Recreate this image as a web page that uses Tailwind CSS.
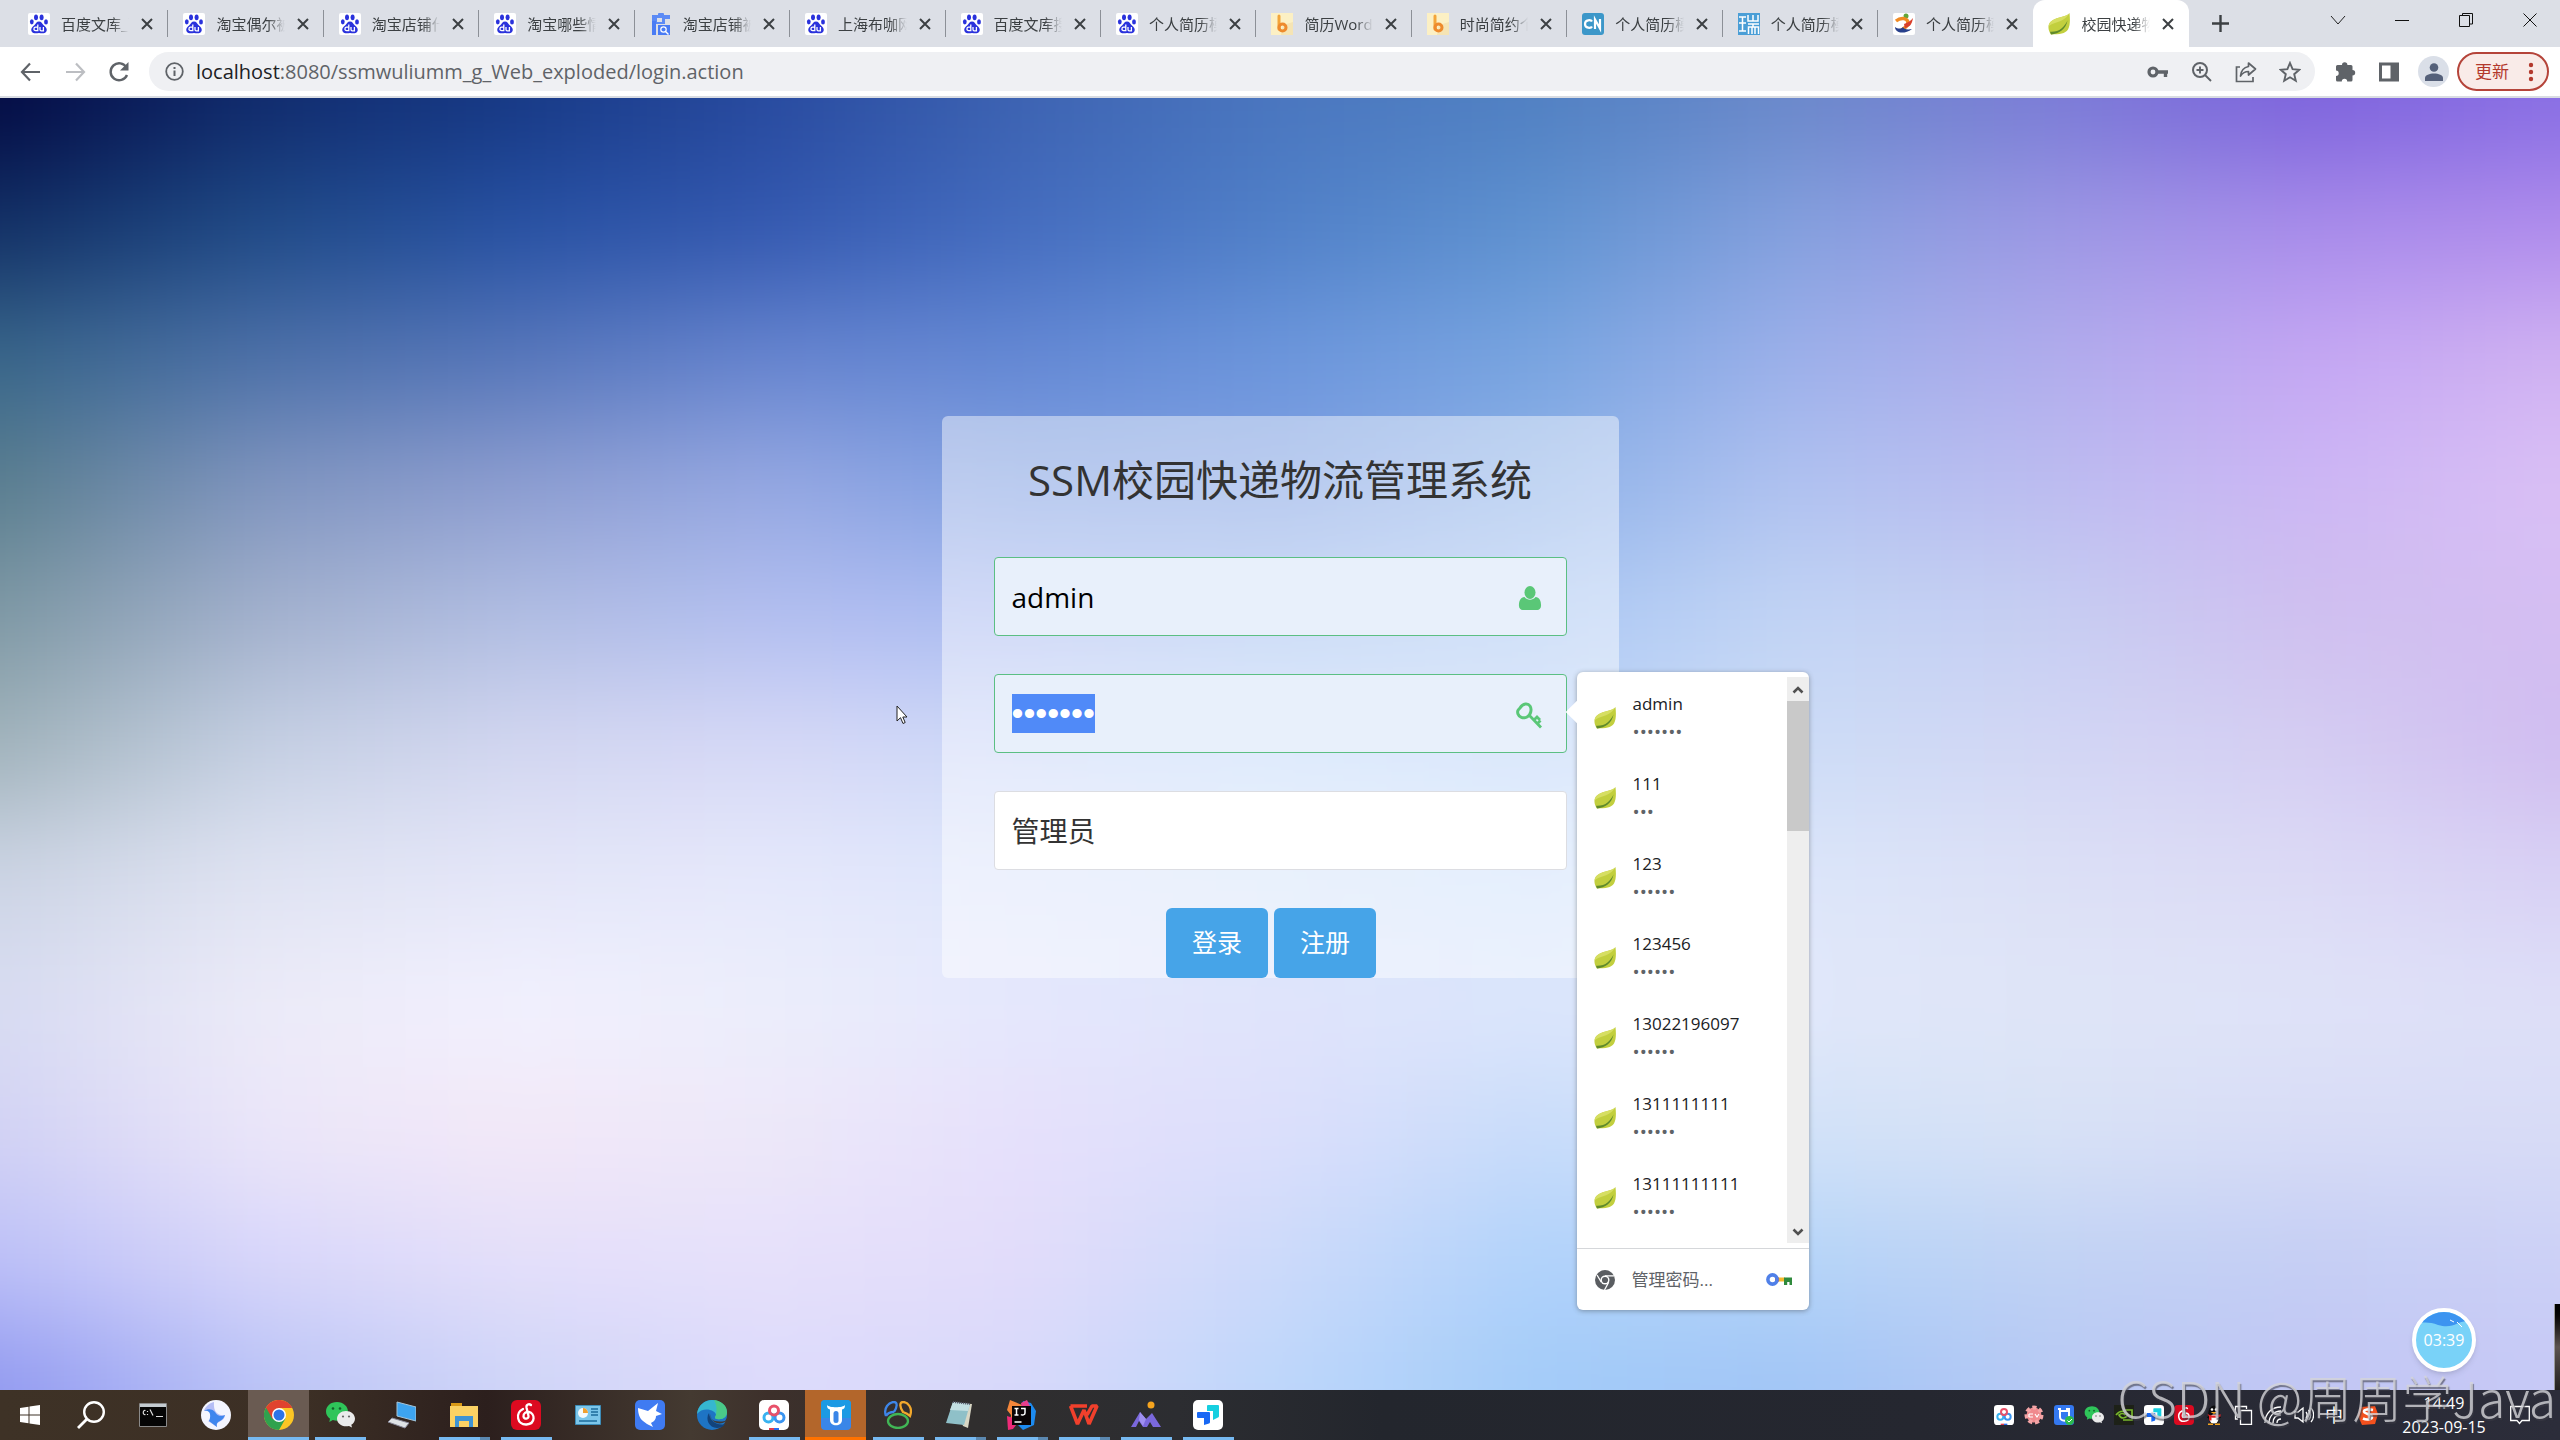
<!DOCTYPE html>
<html lang="zh-CN">
<head>
    <meta charset="UTF-8">
    <meta name="viewport" content="width=device-width, initial-scale=1.0">
    <title>校园快递物流管理系统</title>
    <script src="https://cdn.jsdelivr.net/npm/@tailwindcss/browser@4"></script>
    <style>
        body { font-family: 'Open Sans', 'Noto Sans CJK SC', sans-serif; }
    </style>
</head>
<body class="h-screen flex flex-col overflow-hidden bg-white text-[#202124]">

    <!-- Icon sprites -->
    <svg class="hidden">
        <symbol id="i-baidu" viewBox="0 0 22 22">
            <rect width="22" height="22" rx="2" fill="#fff"/>
            <g fill="#2a32dc">
                <ellipse cx="8" cy="4.3" rx="2" ry="2.9"/><ellipse cx="13.6" cy="4.3" rx="2" ry="2.9"/>
                <ellipse cx="3.8" cy="8.8" rx="1.9" ry="2.6"/><ellipse cx="18" cy="8.9" rx="1.9" ry="2.6"/>
                <path d="M11 8.500c2.600 0 3 2.200 4.700 3.800 2 1.800 3.400 3 3 5.200-.5 3-3.600 3-7.700 2.600-4.100.4-7.200.4-7.700-2.600-.4-2.200 1-3.400 3-5.200C8 10.700 8.400 8.500 11 8.500z"/>
            </g>
            <g fill="none" stroke="#fff" stroke-width="1.3"><path d="M9.800 11.500v6.200H7.600c-2.200 0-2.200-3.600 0-3.600h2.200M12 14v2.600c0 1 .6 1.200 1.200 1.200h2.200V14"/></g>
        </symbol>
        <symbol id="i-doc" viewBox="0 0 22 22">
            <path d="M2 2h18v4h-5v5H6v-3H2z" fill="#5b8af5"/><path d="M7 5h5v4H7z" fill="#dcdfe6"/><rect x="8" y="0" width="6" height="3" rx="1" fill="#5b8af5"/>
            <path d="M2 8h4v14H2zM8 12h12v10H8z" fill="#4a7cf4"/><circle cx="13.500" cy="16.500" r="2.700" fill="none" stroke="#fff" stroke-width="1.2"/><path d="M15.500 18.500l3 3" stroke="#fff" stroke-width="1.4"/>
        </symbol>
        <symbol id="i-b" viewBox="0 0 22 22">
            <rect width="22" height="22" fill="#fcf0c4"/><path d="M12 12l10-3v13H10z" fill="#f5e4b4"/>
            <path d="M8 3v13" stroke="#f3a53a" stroke-width="3" stroke-linecap="round"/><circle cx="11.500" cy="14.500" r="3.500" fill="none" stroke="#ee8a2c" stroke-width="3"/>
        </symbol>
        <symbol id="i-cn" viewBox="0 0 22 22">
            <rect width="22" height="22" rx="3" fill="#3c97c9"/><path d="M10 8.500c-1-2-7-2-7 2.500s6 4.500 7 2.500M13 16V6.500l5 9V6" fill="none" stroke="#fff" stroke-width="2.2"/>
        </symbol>
        <symbol id="i-rui" viewBox="0 0 22 22">
            <rect width="22" height="22" fill="#4a9ed6"/><path d="M1 4h7M1 10h7M1 18h7M4.500 4v14M10 2v6h10V2M15 2v6M10 11h11M15 11v3M10.500 21v-7h10v7M14 14v7M17 14v7" fill="none" stroke="#fff" stroke-width="1.5"/>
        </symbol>
        <symbol id="i-run" viewBox="0 0 22 22">
            <rect width="22" height="22" rx="2" fill="#fff"/><circle cx="13" cy="3" r="2.500" fill="#63a63a"/>
            <path d="M3 8c5-4 12-3 12 2 0 4-5 5-7 8" fill="none" stroke="#f08a24" stroke-width="3.5"/><path d="M11 11c3-1 7-3 9-6-1 6-3 9-8 10z" fill="#d8402c"/><path d="M2 14c0 6 9 8 17 2-5 1-8 0-9-2-2 2-5 2-8 0z" fill="#28408c"/>
        </symbol>
        <symbol id="i-leaf" viewBox="0 0 22 22">
            <path d="M21.500 0C19 5 2 3 .5 13.500.200 17 1.500 18.500 2 20l1 1.500C12 21 17 21 20 16.500 22.500 12 22 5 21.500 0z" fill="#c2cf3e"/>
            <path d="M21.500 0C19 5 2 3 .5 13.500c5-5 15-3 21-13.500z" fill="#d6de62"/>
            <path d="M2 18.800C11 19.500 16.500 14 19.500 7.500 18 16 11 21 3 21.500z" fill="#5f8a2c"/>
        </symbol>
        <symbol id="i-x" viewBox="0 0 12 12"><path d="M1 1l10 10M11 1L1 11" stroke="#3c4043" stroke-width="2" fill="none"/></symbol>
        <symbol id="i-wechat" viewBox="0 0 30 30">
            <path d="M12 2C5.500 2 1 6.200 1 11.500c0 3 1.500 5.500 4 7.200L4.300 22l3.600-1.900c1.300.4 2.700.6 4.100.6C18.500 20.700 23 16.500 23 11.500S18.500 2 12 2z" fill="#2fc55a"/>
            <circle cx="8" cy="8.500" r="1.300" fill="#14602c"/><circle cx="15" cy="8.500" r="1.300" fill="#14602c"/>
            <path d="M21 11c-5 0-9 3.400-9 7.700 0 4.200 4 7.600 9 7.600 1 0 2-.1 3-.4l3 1.600-.7-2.700c2.200-1.400 3.700-3.600 3.700-6.100C30 14.400 26 11 21 11z" fill="#ebebeb"/>
            <circle cx="18" cy="16.500" r="1.100" fill="#666"/><circle cx="24" cy="16.500" r="1.100" fill="#666"/>
        </symbol>
        <symbol id="i-pan" viewBox="0 0 30 30">
            <rect width="30" height="30" rx="5" fill="#fff"/>
            <g fill="none" stroke-width="3"><circle cx="9.500" cy="17.500" r="4.500" stroke="#38b2f0"/><circle cx="20.500" cy="17.500" r="4.500" stroke="#3a94f0"/><circle cx="15" cy="10.500" r="4.500" stroke="#e8516a"/></g>
            <path d="M10 28h5v2h-5z" fill="#e03a4e"/><path d="M15 28h5v2h-5z" fill="#2a6ff0"/>
        </symbol>
        <symbol id="i-netease" viewBox="0 0 30 30">
            <rect width="30" height="30" rx="6" fill="#dc0a20"/>
            <path d="M20 5c-2-1.500-5-.5-4.500 2.500l2 8.500c.6 3-4.500 4-5 .5-.3-3 2.500-5 5.500-4.500 6 1 7 12-2.500 12.500C6 25 4 13 12 9" fill="none" stroke="#fff" stroke-width="2.3" stroke-linecap="round"/>
        </symbol>
        <symbol id="i-todesk" viewBox="0 0 30 30">
            <rect width="30" height="30" rx="5" fill="#fff"/><path d="M14 6q0-1 1-1h10q1 0 1 1v10q0 1-1 1.500l-5 2.500V11h-6z" fill="#16cfe0"/><path d="M4 13q0-1 1-1h11q1 0 1 1v9q0 1-1 1.500l-5 1.500v-7H5q-1 0-1-1z" fill="#1768f4"/>
        </symbol>
        <symbol id="i-bull" viewBox="0 0 30 30">
            <rect width="30" height="30" rx="4" fill="#3a86e8"/><path d="M0 4a4 4 0 014-4h22a4 4 0 014 4v14H0z" fill="#1c9ae4"/>
            <path d="M6 5c0 3 1 4 3 4.500V20c0 7 12 7 12 0V9.500c2-.5 3-1.500 3-4.500-2 3-16 3-18 0z" fill="#fff"/><rect x="12.500" y="11" width="5" height="12" rx="2.500" fill="#3a86e8"/>
        </symbol>
    </svg>

    <!-- Tab strip -->
    <header class="shrink-0">
        <div class="h-[47px] bg-[#dcdfe6] flex items-stretch">
            <div id="tabs" class="w-[85.5%] pl-[13px] flex"></div>
            <button aria-label="新标签页" class="ml-[22px] w-5 grid place-items-center"><svg class="size-[17px]" viewBox="0 0 17 17"><path d="M8.500 0v17M0 8.500h17" stroke="#3c4043" stroke-width="2.4"/></svg></button>
            <div class="ml-auto mr-[22px] h-10 flex items-center gap-12">
                <button aria-label="搜索标签页"><svg class="size-4" viewBox="0 0 16 16"><path d="M1 4l7 8 7-8" stroke="#222" fill="none"/></svg></button>
                <button aria-label="最小化"><svg class="size-4" viewBox="0 0 16 16"><path d="M1 8.500h14" stroke="#111"/></svg></button>
                <button aria-label="还原"><svg class="size-4" viewBox="0 0 16 16"><path d="M1.500 3.500h10v11h-10zM4.500 3V1.500h10v10.500H12" stroke="#111" fill="none"/></svg></button>
                <button aria-label="关闭"><svg class="size-4" viewBox="0 0 16 16"><path d="M1.500 1.500l13 13M14.500 1.500l-13 13" stroke="#111" fill="none"/></svg></button>
            </div>
        </div>

        <!-- Toolbar -->
        <div class="h-[51px] border-b-2 border-[#d9dce2] pl-5 pr-[11px] flex items-center">
            <button aria-label="后退"><svg class="size-[22px]" viewBox="0 0 22 22"><path d="M20 11H2M10 2.500L2 11l8 8.500" stroke="#5f6368" stroke-width="2.2" fill="none"/></svg></button>
            <button aria-label="前进" class="ml-[22px]"><svg class="size-[22px]" viewBox="0 0 22 22"><path d="M2 11h18M12 2.500l8 8.500-8 8.500" stroke="#bcbec2" stroke-width="2.2" fill="none"/></svg></button>
            <button aria-label="重新加载" class="ml-[22px]"><svg class="size-[22px]" viewBox="0 0 22 22"><path d="M18.500 6.500A8.500 8.500 0 1019 14" stroke="#5f6368" stroke-width="2.4" fill="none"/><path d="M20.500 1v8.500H12z" fill="#5f6368"/></svg></button>
            <div class="ml-[19px] flex-1 h-[39px] rounded-full bg-[#eff0f3] flex items-center pl-4 pr-[14px] gap-[22px]">
                <svg class="size-[19px]" viewBox="0 0 19 19"><circle cx="9.500" cy="9.500" r="8.300" fill="none" stroke="#5f6368" stroke-width="1.8"/><path d="M9.500 8.500v5.500M9.500 5v2" stroke="#5f6368" stroke-width="2"/></svg>
                <p class="-ml-2.5 flex-1 text-xl leading-6 text-[#5f6368]"><span class="text-[#202124]">localhost</span>:8080/ssmwuliumm_g_Web_exploded/login.action</p>
                <svg class="size-[22px]" viewBox="0 0 22 22"><circle cx="6" cy="11" r="4" fill="none" stroke="#5f6368" stroke-width="3.2"/><path d="M10 11h11M18.500 11v5" stroke="#5f6368" stroke-width="3.4"/></svg>
                <svg class="size-[22px]" viewBox="0 0 22 22"><circle cx="9" cy="9" r="7" fill="none" stroke="#5f6368" stroke-width="2"/><path d="M14 14l6 6M9 5.500v7M5.500 9h7" stroke="#5f6368" stroke-width="1.9"/></svg>
                <svg class="size-[22px]" viewBox="0 0 22 22"><path d="M5 6H1.500v14.500H18V16" fill="none" stroke="#5f6368" stroke-width="1.7"/><path d="M13.500 2l7 6-7 6v-3.500c-4 0-6 1.500-8 4.500.5-5 3-8.500 8-9.500z" fill="none" stroke="#5f6368" stroke-width="1.7" stroke-linejoin="round"/></svg>
                <svg class="size-[22px]" viewBox="0 0 22 22"><path d="M11 2l2.600 6.200 6.700.6-5.100 4.400 1.600 6.600L11 16.300l-5.800 3.500 1.600-6.600-5.100-4.400 6.700-.6z" fill="none" stroke="#5f6368" stroke-width="1.9"/></svg>
            </div>
            <div class="ml-[19px] flex items-center gap-[22px]">
                <svg class="size-[22px]" viewBox="0 0 22 22"><path d="M8 4a2.700 2.700 0 015.400 0H17a1.500 1.500 0 011.500 1.500V9a2.700 2.700 0 010 5.400V19a1.500 1.500 0 01-1.500 1.500h-3.800a2.700 2.700 0 00-5.400 0H3.500A1.500 1.500 0 012 19v-4a2.700 2.700 0 000-5.400V5.500A1.500 1.500 0 013.500 4z" fill="#5f6368"/></svg>
                <svg class="size-[22px]" viewBox="0 0 22 22"><path d="M1 1.500h20v19H1zM4 4.500v13h8.500v-13z" fill="#5f6368" fill-rule="evenodd"/></svg>
            </div>
            <span class="ml-[18px] size-[31px] rounded-full bg-[#dadfe8] grid place-items-center"><svg class="size-[18px]" viewBox="0 0 18 18"><circle cx="9" cy="4.500" r="4.300" fill="#55617a"/><path d="M0 18v-3c0-6 18-6 18 0v3z" fill="#55617a"/></svg></span>
            <button class="ml-2 h-[39px] w-[92px] rounded-full border-2 border-[#b5443a] bg-[#f9ebe8] text-[#b3382c] text-[17px] flex items-center justify-between pl-4 pr-3">更新
                <svg class="w-2 h-5" viewBox="0 0 8 20"><circle cx="4" cy="3" r="2.200" fill="#b3382c"/><circle cx="4" cy="10" r="2.200" fill="#b3382c"/><circle cx="4" cy="17" r="2.200" fill="#b3382c"/></svg>
            </button>
        </div>
    </header>

    <main class="relative flex-1 min-h-0 flex justify-center items-start pt-[318px]">
        <!-- Background: horizontal gradient bands blended vertically -->
        <svg id="backdrop" class="absolute inset-0 size-full" viewBox="0 0 1000 500" preserveAspectRatio="none">
            <defs><filter id="soft" filterUnits="userSpaceOnUse" x="-100" y="-200" width="1200" height="900" color-interpolation-filters="sRGB"><feGaussianBlur stdDeviation="14 20"/></filter></defs>
            <g id="bands" filter="url(#soft)"></g>
        </svg>

        <form class="relative w-[677px] h-[562px] rounded-md bg-white/45 px-[52px]" onsubmit="return false">
            <h1 class="pt-8 text-[42px] leading-[64px] text-center text-[#333]">SSM校园快递物流管理系统</h1>
            <div class="relative mt-[45px]">
                <input id="username" aria-label="用户名" type="text" value="admin" class="block w-full h-[79px] rounded-sm border border-[#5bbf83] bg-[#e8f0fb] px-[17px] text-[28px] text-black outline-none">
                <svg class="absolute right-[25px] top-[29px] size-6" viewBox="0 0 24 26"><ellipse cx="12" cy="7" rx="6" ry="7" fill="#5ac777"/><path d="M6 12c3 4 9 4 12 0 4 0 6 4 6 9 0 3-2 5-4 5H4c-2 0-4-2-4-5 0-5 2-9 6-9z" fill="#5ac777"/></svg>
            </div>
            <div class="relative mt-[38px]">
                <input id="password" aria-label="密码" type="password" value="1234567" class="block w-full h-[79px] rounded-sm border border-[#5bbf83] bg-[#e8f0fb] px-[17px] font-[Liberation_Sans] text-[34px] text-black outline-none selection:bg-[#508af8] selection:text-white">
                <svg class="absolute right-6 top-[28px] size-[27px]" viewBox="0 0 27 27" fill="none" stroke="#5ac777"><path d="M4 6c3-5 8-5 10-2s1 9-3 11-8 0-9-3 0-4 2-6z" stroke-width="3"/><path d="M13 13l12 12.500M18 18l3-3 3 3M21.500 21.500l3-3" stroke-width="2.800"/></svg>

                <!-- Saved passwords -->
                <div class="absolute left-full -top-0.5 z-10 ml-[10px] w-[232px] h-[638px] rounded-md bg-white shadow-[0_1px_5px_rgba(60,64,67,0.45)] flex flex-col">
                    <span class="absolute -left-2 top-8 size-4 rotate-45 bg-white"></span>
                    <div class="mt-[5px] h-[566px] flex overflow-hidden">
                        <ul id="accounts" class="flex-1 pt-[11px]"></ul>
                        <div class="w-[22px] bg-[#eee] flex flex-col items-center justify-between">
                            <div class="w-full"><svg class="mx-auto h-6 w-3" viewBox="0 0 12 24"><path d="M1.500 15.500L6 11l4.500 4.500" stroke="#505050" stroke-width="2.6" fill="none"/></svg><div class="h-[130px] bg-[#c9c9c9]"></div></div>
                            <svg class="h-6 w-3" viewBox="0 0 12 24"><path d="M1.500 10.500L6 15l4.500-4.500" stroke="#505050" stroke-width="2.6" fill="none"/></svg>
                        </div>
                    </div>
                    <a href="#" class="mt-[5px] flex-1 border-t border-[#d5d7da] flex items-center pl-[18px] pr-4 text-[17px] text-[#5f6368]">
                        <svg class="size-5 mr-[17px]" viewBox="0 0 20 20"><circle cx="10" cy="10" r="10" fill="#5a5d61"/><circle cx="10" cy="10" r="4.500" fill="#fff"/><circle cx="10" cy="10" r="3.100" fill="#5a5d61"/><path d="M10 5.800h9M6.300 12.200L2 5M13.700 12.200L9.500 20" stroke="#fff" stroke-width="1.3"/></svg>
                        <span class="flex-1">管理密码...</span>
                        <svg class="w-[27px] h-3.5" viewBox="0 0 27 14"><path d="M10 4.500h9v4h-9z" fill="#f4b92e"/><path d="M9 4.500h4v4H9z" fill="#e2503c"/><path d="M18 4.500h8V12h-2.500V9h-2.300v3H18z" fill="#2f8a3c"/><circle cx="6.500" cy="6.500" r="4.600" stroke="#5080e8" stroke-width="3.6" fill="none"/></svg>
                    </a>
                </div>
            </div>
            <select aria-label="角色" class="block mt-[38px] w-full h-[79px] appearance-none rounded-sm border border-[#dcdde2] bg-white px-[17px] text-[28px] text-[#333] outline-none">
                <option>管理员</option>
            </select>
            <div class="mt-[38px] mr-[18px] flex justify-center gap-1.5 text-white text-[25px]">
                <button class="w-[102px] h-[70px] rounded-md bg-[#46a4e8]">登录</button>
                <button class="w-[102px] h-[70px] rounded-md bg-[#46a4e8]">注册</button>
            </div>
        </form>

        <!-- Mouse pointer -->
        <svg class="absolute left-[35%] top-[607px] w-3 h-5" viewBox="0 0 12 20"><path d="M1 1v15l3.500-3.300L7 18.500l2.200-1L6.800 12H11z" fill="#fff" stroke="#222"/></svg>

        <!-- Recording timer -->
        <div class="absolute right-[84px] bottom-[18px] size-16 rounded-full border-4 border-white bg-[#79d2f8] overflow-hidden grid place-items-center shadow-md">
            <svg class="absolute inset-0 size-full" viewBox="0 0 56 56"><path d="M0 0h56v10c-14-4-16 8-34 3C14 10 6 10 0 12z" fill="#3c94f0"/><path d="M34 8l4 2M41 10l5 5" stroke="#fff" stroke-width="1"/></svg>
            <span class="relative text-base leading-5 text-white">03:39</span>
        </div>
        <div class="absolute right-0 bottom-0 w-[6px] h-[86px] bg-gradient-to-b from-black via-[#5c5350] to-[#24211f] border-l border-[#999]"></div>
    </main>

    <!-- Taskbar -->
    <footer class="relative shrink-0 h-[50px] flex bg-[linear-gradient(90deg,#3e3226_0%,#3c2f25_12%,#2c1f1d_19%,#443a31_27%,#3d302b_30%,#302e2e_38%,#2c2d31_46%,#23262d_54%,#252730_75%,#2c2d3a_100%)]">
        <nav class="flex">
            <button aria-label="开始" class="w-[60px] grid place-items-center"><svg class="size-5" viewBox="0 0 20 20"><path d="M0 3l8.500-1.200v7.700H0zM9.500 1.600L20 0v9.500H9.500zM0 10.500h8.500v7.700L0 17zM9.500 10.500H20V20L9.500 18.400z" fill="#fff"/></svg></button>
            <button aria-label="搜索" class="w-[62px] grid place-items-center"><svg class="size-7" viewBox="0 0 28 28"><circle cx="17" cy="11" r="9.800" fill="none" stroke="#fff" stroke-width="2.4"/><path d="M10 18l-9 9" stroke="#fff" stroke-width="2.8"/></svg></button>
            <button aria-label="命令提示符" class="w-[62px] grid place-items-center"><svg class="w-7 h-6" viewBox="0 0 28 24"><path d="M.5.500h27v23H.5z" fill="#050505" stroke="#8a8a8a"/><path d="M1 1h26v3H1z" fill="#c4cbd0"/><path d="M6.500 7.500c-3-1-3 5 0 4M8.500 8v1M8.500 11v1M11 6.500l3 6M17 13.500h7" stroke="#ddd" stroke-width="1.2" fill="none"/></svg></button>
            <button aria-label="迅雷" class="w-[64px] grid place-items-center"><svg class="size-[30px]" viewBox="0 0 30 30"><circle cx="15" cy="15" r="15" fill="#f3f5ff"/><path d="M13 2c-5 1-9 5-10 9 3-1 6 0 7 3 1 4 0 6-3 7l9 6c-1-2 0-4 2-5 4-2 6-4 6-7-6 1-12-2-11-13z" fill="#b4bdf6"/><path d="M3 11c4-1 7 1 6 7l-1 3 8 6c-1-3 0-5 3-6 2-1 4-3 5-6-4 2-8 1-10-3-2-3-7-4-11-1z" fill="#3f86ee"/></svg></button>
            <button aria-label="Chrome" class="w-[61px] grid place-items-center bg-[#6a5b52] border-b-[3px] border-[#76b9f1]"><svg class="size-[30px] mt-0.5" viewBox="0 0 30 30"><circle cx="15" cy="15" r="15" fill="#fbc625"/><path d="M15 15L2 7.500A15 15 0 0015 30l6.500-11.500z" fill="#2fa24e"/><path d="M2 7.500A15 15 0 0128.300 8H15l-6.500 11z" fill="#e0432f"/><circle cx="15" cy="15" r="7" fill="#fff"/><circle cx="15" cy="15" r="5.500" fill="#2c74e8"/></svg></button>
            <button aria-label="微信" class="w-[62px] grid place-items-center relative"><svg class="size-[30px]"><use href="#i-wechat"/></svg><i class="absolute bottom-0 w-[51px] h-[3px] bg-[#76b9f1]"></i></button>
            <button aria-label="此电脑" class="w-[62px] grid place-items-center"><svg class="size-7" viewBox="0 0 28 28"><path d="M9 1l19 5v14L9 15z" fill="#3da4f0" stroke="#a5c4d8"/><path d="M0 21l4-4 17 5-4 5z" fill="#dfe3e6" stroke="#889"/></svg></button>
            <button aria-label="文件资源管理器" class="w-[62px] grid place-items-center relative"><svg class="w-7 h-6" viewBox="0 0 28 24"><path d="M1 0h11v5H1z" fill="#d99a18"/><path d="M0 3h28v21H0z" fill="#fbd264"/><path d="M5 24V13h18v11h-4v-6H9v6z" fill="#3f94d4"/></svg><i class="absolute bottom-0 w-[51px] h-[3px] bg-[#76b9f1] border-r-[10px] border-[#5b88b0]"></i></button>
            <button aria-label="网易云音乐" class="w-[62px] grid place-items-center relative"><svg class="size-[30px]"><use href="#i-netease"/></svg><i class="absolute bottom-0 w-[51px] h-[3px] bg-[#76b9f1]"></i></button>
            <button aria-label="控制面板" class="w-[62px] grid place-items-center"><svg class="w-[26px] h-5" viewBox="0 0 26 20"><path d="M.5.500h25v19H.5z" fill="#7cc6ea" stroke="#3c8cb8"/><circle cx="8" cy="8" r="5" fill="#f4fafd"/><path d="M8 8V3a5 5 0 015 5z" fill="#f0a030"/><path d="M16 4h7M16 7h7M16 10h7M4 16h18" stroke="#1d6c9c" stroke-width="1.5"/></svg></button>
            <button aria-label="飞鸟" class="w-[62px] grid place-items-center"><svg class="size-[30px]" viewBox="0 0 30 30"><rect width="30" height="30" rx="5" fill="#3f7bf2"/><path d="M3 8l10 3 10-8-2 8 6 3-6 2c0 4-3 6-5 7l2 4-6-3-4-3c-3-2-5-7-5-13z" fill="#fff"/></svg></button>
            <button aria-label="Edge" class="w-[62px] grid place-items-center"><svg class="size-[30px]" viewBox="0 0 30 30"><circle cx="15" cy="15" r="15" fill="#1e74c4"/><path d="M0 14C1 5 8 0 15 0c9 0 15 6 15 12 0 5-4 8-10 7-3-.5-2-2-1-4 0-5-13-9-19-1z" fill="#36b7d0"/><path d="M17 0c8 1 13 6 13 12 0 5-4 8-10 7-3-.5-2-2-1-4 0-3 2-8-2-15z" fill="#52cf70" fill-opacity=".75"/><path d="M12 13c-4 6 0 15 8 15 3 0 6-1 8-4-7 2-15-2-16-11z" fill="#12437c"/><path d="M14 14c-2 5 3 9 14 7l2-3v3l-2 1c-2 1-5 2-8 1-4-1-7-5-6-9z" fill="#413731"/></svg></button>
            <button aria-label="百度网盘" class="w-[62px] grid place-items-center relative"><svg class="size-[30px]"><use href="#i-pan"/></svg><i class="absolute bottom-0 w-[51px] h-[3px] bg-[#76b9f1]"></i></button>
            <button aria-label="录屏" class="w-[61px] grid place-items-center bg-[#b3662b] border-b-[3px] border-[#ff7200]"><svg class="size-[30px] mt-0.5"><use href="#i-bull"/></svg></button>
            <button aria-label="Navicat" class="ml-px w-[62px] grid place-items-center relative"><svg class="size-7" viewBox="0 0 28 28" fill="none" stroke-width="2.3"><path d="M2 15C-1 7 5 1 10 1c4 0 3 6 0 10" stroke="#3e86e8"/><path d="M2 15c1-2 3-4 8-4" stroke="#3e86e8"/><path d="M26 15c3-8-2-14-7-14-4 0-3 6 0 10 3 1 5 2 7 4z" stroke="#f2a82c"/><path d="M14 13c5 0 10 3 10 7s-5 7-10 7-10-3-10-7 5-7 10-7z" stroke="#41b656"/></svg><i class="absolute bottom-0 w-[51px] h-[3px] bg-[#76b9f1]"></i></button>
            <button aria-label="记事本" class="w-[62px] grid place-items-center relative"><svg class="size-7" viewBox="0 0 28 28"><path d="M9 2l17 1-4 24-5-2z" fill="#d8d6c4"/><path d="M7 1l17 2-6 21L0 22z" fill="#8fc0c8"/><path d="M7 1l17 2-2 7L4 9z" fill="#c3dfe2"/><path d="M7 1l17 2" stroke="#556" stroke-width="2" stroke-dasharray="1 1"/></svg><i class="absolute bottom-0 w-[51px] h-[3px] bg-[#76b9f1] border-r-[10px] border-[#5b88b0]"></i></button>
            <button aria-label="IntelliJ IDEA" class="w-[62px] grid place-items-center relative"><svg class="size-[30px]" viewBox="0 0 30 30"><path d="M3 0l12 5-4 18-9 6L4 15 0 10z" fill="#f4863a"/><path d="M0 16l13 4-7 9-5 1z" fill="#ee2a78"/><path d="M16 1l8 2 5 8-2 14-11 5-6-6z" fill="#1d8bf0"/><path d="M14 3l6-3 3 6-8 3z" fill="#e83e8c"/><path d="M5 6h19v19H5z" fill="#0a0506"/><path d="M7.500 8.500h4M7.500 15h4M9.500 8.500V15M14 8.500h4V13c0 2-3 2.500-4 1.500M7.500 22h7" stroke="#fff" stroke-width="1.5" fill="none"/></svg><i class="absolute bottom-0 w-[51px] h-[3px] bg-[#76b9f1] border-r-[10px] border-[#5b88b0]"></i></button>
            <button aria-label="WPS" class="w-[62px] grid place-items-center relative"><svg class="w-[30px] h-[22px]" viewBox="0 0 30 22"><path d="M1.500 2H18M1.500 2l7 18L15 6l5 14 8-18h-5l-5 9" fill="none" stroke="#f1402c" stroke-width="3.6" stroke-linejoin="bevel"/></svg><i class="absolute bottom-0 w-[51px] h-[3px] bg-[#76b9f1] border-r-[10px] border-[#5b88b0]"></i></button>
            <button aria-label="图表" class="w-[62px] grid place-items-center relative"><svg class="w-[30px] h-7" viewBox="0 0 30 28"><path d="M0 26L9 11l6 7 6-6 9 14h-8l-3-5-3 5h-4l-4-6-3 6z" fill="#7a68dc"/><path d="M9 11l6 7-3 7-4-6z" fill="#9f90f0"/><circle cx="20" cy="4" r="3.500" fill="#f6a41e"/></svg><i class="absolute bottom-0 w-[51px] h-[3px] bg-[#76b9f1]"></i></button>
            <button aria-label="ToDesk" class="w-[62px] grid place-items-center relative"><svg class="size-[30px]"><use href="#i-todesk"/></svg><i class="absolute bottom-0 w-[51px] h-[3px] bg-[#76b9f1]"></i></button>
        </nav>

        <div class="ml-auto flex items-center gap-[10px]">
            <svg class="size-5"><use href="#i-pan"/></svg>
            <svg class="size-5" viewBox="0 0 20 20"><circle cx="10" cy="10" r="7.500" fill="#f08a8e" stroke="#f4a4a6" stroke-width="4" stroke-dasharray="4 2.7"/><path d="M5 9h4M5 12h4M5 9v3M11 9l2 3 2-3" stroke="#fff" stroke-width="1.2" fill="none"/></svg>
            <svg class="size-5" viewBox="0 0 20 20"><rect width="20" height="20" rx="3" fill="#3478f0"/><path d="M4 4h2v2h7V4h2v8c0 5-9 5-9 0V6" fill="none" stroke="#fff" stroke-width="2"/><circle cx="15.500" cy="15.500" r="4.500" fill="#2dbb4c"/><path d="M13.500 15.500l1.500 1.500 3-3" stroke="#fff" fill="none"/></svg>
            <svg class="size-5"><use href="#i-wechat"/></svg>
            <svg class="size-5" viewBox="0 0 20 20"><path d="M0 0h20v20H0z" fill="#1d2117"/><path d="M2 10c4-5 9-5 12 0-3 4-7 4-9 0 2-2 5-2 6 0M9 5h9v10H9" fill="none" stroke="#78b82c" stroke-width="1.7"/></svg>
            <svg class="size-5"><use href="#i-todesk"/></svg>
            <svg class="size-5"><use href="#i-netease"/></svg>
            <svg class="size-5" viewBox="0 0 20 20"><ellipse cx="10" cy="10" rx="6" ry="9.500" fill="#0c0c0e"/><path d="M3 13l2-4h10l2 4z" fill="#0c0c0e"/><ellipse cx="10" cy="14" rx="4.500" ry="4.500" fill="#fff"/><circle cx="8" cy="4.500" r="1.300" fill="#fff"/><circle cx="12" cy="4.500" r="1.300" fill="#fff"/><path d="M6.500 7h7l-3.500 2zM4 18.500h5v1.500H4zM11 18.500h5v1.500h-5z" fill="#f4a41e"/><path d="M3.500 9c4 2 9 2 13 0v2.500c-3 1.500-7 1.500-9 1v3H5v-4z" fill="#e02424"/></svg>
            <svg class="size-5" viewBox="0 0 20 20"><path d="M6.500 5.500h11v14h-11zM4 14H1.500V1.500h11V4" fill="none" stroke="#fff" stroke-width="1.3"/></svg>
            <svg class="size-5" viewBox="0 0 20 20" fill="none" stroke="#fff" stroke-width="1.3"><path d="M1 18C1 8 8 2 17 2M5 18c0-7 5-12 12-12M9 18c0-5 3-8 8-8M13 18c0-2 1-4 4-4"/></svg>
            <svg class="size-5" viewBox="0 0 20 20" fill="none" stroke="#fff" stroke-width="1.3"><path d="M1 7h3l5-4v14l-5-4H1zM12 7c1.500 2 1.500 4 0 6M14.500 5c2.500 3 2.500 7 0 10M17 3c3.500 4 3.500 10 0 14"/></svg>
            <span class="w-5 text-lg leading-5 text-center text-white">中</span>
            <svg class="ml-1 size-5" viewBox="0 0 20 20"><path d="M2 2l15-1 3 8-3 10-13 1-4-9z" fill="#f4511e"/><path d="M15 5c-4-1-9-1-9 1.500S14 9 14 12s-6 3-9 1.500" fill="none" stroke="#fff" stroke-width="2.6"/></svg>
            <div class="ml-3 w-[88px] text-center text-base leading-6 text-white"><p>14:49</p><p>2023-09-15</p></div>
            <svg class="ml-3 mr-[30px] size-5" viewBox="0 0 20 20"><path d="M.700 1.500h18.600v14H12L9.500 18.500 7 15.500H.700z" fill="none" stroke="#fff" stroke-width="1.3"/></svg>
        </div>

        <p class="absolute right-1 bottom-2 z-20 text-[50px] leading-[72px] whitespace-nowrap text-[#d4d4d8]/80 font-[Noto_Sans_CJK_SC] font-light [text-shadow:1px_2px_1px_rgba(60,60,70,0.6)]">CSDN @周周学Java</p>
    </footer>

    <script>
        const getEl = (id) => document.getElementById(id);

        const tabs = [
            ['baidu', '百度文库_百度'], ['baidu', '淘宝偶尔被投诉'], ['baidu', '淘宝店铺什么'], ['baidu', '淘宝哪些情况'],
            ['doc', '淘宝店铺被封'], ['baidu', '上海布咖网络'], ['baidu', '百度文库搜索'], ['baidu', '个人简历模板'],
            ['b', '简历Word模板'], ['b', '时尚简约个人'], ['cn', '个人简历模板'], ['rui', '个人简历模板'],
            ['run', '个人简历模板'], ['leaf', '校园快递物流'],
        ];
        getEl('tabs').innerHTML = tabs.map(([icon, title], i) => {
            const active = i === tabs.length - 1;
            const edge = i >= tabs.length - 2 ? '' : '<span class="absolute right-0 top-2.5 h-[27px] w-px bg-[#8c9097]"></span>';
            return `<div class="${active ? 'bg-white rounded-t-xl' : ''} relative flex-1 min-w-0 flex items-center pl-[15px] pr-[15px]">
                <svg class="size-[22px] shrink-0"><use href="#i-${icon}"/></svg>
                <span class="ml-[11px] flex-1 min-w-0 overflow-hidden whitespace-nowrap text-[15px] leading-6 text-[#3c4043] [mask-image:linear-gradient(90deg,#000_75%,transparent_100%)]">${title}</span>
                <button aria-label="关闭标签页" class="ml-3"><svg class="size-3"><use href="#i-x"/></svg></button>${edge}</div>`;
        }).join('');

        const accounts = [['admin', 7], ['111', 3], ['123', 6], ['123456', 6], ['13022196097', 6], ['1311111111', 6], ['13111111111', 6]];
        getEl('accounts').innerHTML = accounts.map(([name, n]) =>
            `<li class="h-20 pl-[17px] flex items-start">
                <svg class="mt-[19px] size-[22px] mr-[17px]"><use href="#i-leaf"/></svg>
                <div class="text-[17px] leading-8"><p>${name}</p><p class="text-[19px] leading-6 text-[#5f6368]">${'•'.repeat(n)}</p></div>
            </li>`).join('');

        // Backdrop colours, left to right, one row per band
        const rows = [
            ['#030a42', '#102a6c', '#163884', '#284a9f', '#3d63b2', '#4a76bf', '#5080c2', '#6a88ca', '#7a7cd6', '#7c62dc', '#886ee4'],
            ['#123066', '#1f4a86', '#2751a3', '#3358b0', '#446cbf', '#5080c8', '#5f92d0', '#84a0de', '#9c98e4', '#a88cea', '#b08cec'],
            ['#38668a', '#4c70a8', '#5676ba', '#6684cf', '#6488d4', '#6c96dc', '#78a4e0', '#9cb0ea', '#b0acec', '#c4a6f3', '#d0b2f2'],
            ['#5a7e8e', '#8095bf', '#8d9dd0', '#96a8e2', '#80a0e2', '#7e9ee2', '#8eb2e8', '#b0c2f0', '#bcbcf0', '#ccb6f4', '#dac0f5'],
            ['#7e98a4', '#a2b0cc', '#b0bde2', '#b2bef0', '#acbcf2', '#a4c0f0', '#acc8f4', '#c2d4f4', '#c6cef2', '#cfbfef', '#d4bef2'],
            ['#a0b2ba', '#c4cfe2', '#d2d6f0', '#d6d8f6', '#ccd8f8', '#c4dafa', '#bcd4f8', '#ccdcf6', '#d2d6f4', '#d4cdf2', '#d0bcf0'],
            ['#ccd4e4', '#dfe3f2', '#e4e6f8', '#e5e8fb', '#dee6fb', '#d8e6fa', '#d0e2fb', '#dce6fa', '#dce0f6', '#dcdaf5', '#d8d0f4'],
            ['#d8dcf2', '#ecebf8', '#f2f1fe', '#eceefb', '#e5e8fc', '#e0e4fb', '#dce6fb', '#e2e8fa', '#dfe5f7', '#dfe3f8', '#dedff8'],
            ['#d2d2f4', '#ebe6f9', '#f3e8f7', '#ede8f9', '#e6e0fb', '#dcdffb', '#c8dcfa', '#d2e2f8', '#d8e2f6', '#d8dcf6', '#d8dcf6'],
            ['#bcc0f8', '#d8d6fa', '#e4dffa', '#e6e0fa', '#e2dcfa', '#ccdafa', '#b0d2fa', '#b4d4f8', '#c0d2f4', '#c4cef4', '#ccd0f6'],
            ['#9098f0', '#b8c2f6', '#cdd4f8', '#dcdafb', '#d6d8fa', '#bcd6fa', '#a2cbf9', '#a0c4f6', '#b6c8f4', '#c2c6f4', '#c6c8f6'],
        ];
        getEl('bands').innerHTML = rows.map((row, i) => {
            const y = i === 0 ? -200 : i * 50 - 25;
            const h = i === 0 || i === rows.length - 1 ? 225 : 50;
            const stops = row.map((c, n) => `<stop offset="${(n + 1) / 12}" stop-color="${c}"/>`).join('');
            return `<linearGradient id="g${i}">${stops}</linearGradient><rect x="-100" y="${y}" width="1200" height="${h + 1}" fill="url(#g${i})"/>`;
        }).join('');

        window.onload = () => {
            getEl('password').focus();
            getEl('password').select();
        };
    </script>
</body>
</html>
